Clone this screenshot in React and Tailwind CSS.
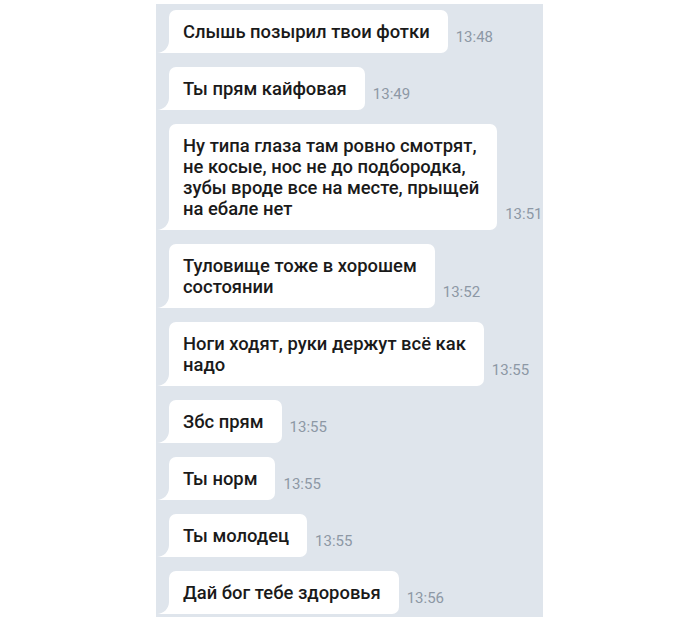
import React from "react";

const messages = [
  { lines: ["Слышь позырил твои фотки"], time: "13:48" },
  { lines: ["Ты прям кайфовая"], time: "13:49" },
  {
    lines: [
      "Ну типа глаза там ровно смотрят,",
      "не косые, нос не до подбородка,",
      "зубы вроде все на месте, прыщей",
      "на ебале нет",
    ],
    time: "13:51",
  },
  { lines: ["Туловище тоже в хорошем", "состоянии"], time: "13:52" },
  { lines: ["Ноги ходят, руки держут всё как", "надо"], time: "13:55" },
  { lines: ["Збс прям"], time: "13:55" },
  { lines: ["Ты норм"], time: "13:55" },
  { lines: ["Ты молодец"], time: "13:55" },
  { lines: ["Дай бог тебе здоровья"], time: "13:56" },
];

function Bubble({ lines, time }) {
  return (
    <div className="flex items-end">
      <div className="relative ml-[13px] rounded-[7px] rounded-bl-none bg-white pl-[14px] pr-[18px] py-[11px] text-[18.4px] font-medium leading-[21px] text-[#1a1a1a] whitespace-nowrap">
        <svg
          className="absolute left-[-12px] bottom-0"
          width="13"
          height="12"
          viewBox="0 0 13 12"
        >
          <path d="M13 0 L12 0 C12 7 6 12 0 12 L13 12 Z" fill="#ffffff" />
        </svg>
        {lines.map((l, i) => (
          <div key={i}>{l}</div>
        ))}
      </div>
      <div className="ml-[8px] mb-[8px] text-[15px] leading-[15px] text-[#8d98a5]">
        {time}
      </div>
    </div>
  );
}

export default function App() {
  return (
    <div
      className="w-[700px] h-[619px] bg-white pl-[156px] pt-[4px]"
      style={{ fontFamily: "Roboto, 'Noto Sans', sans-serif" }}
    >
      <div className="w-[387px] h-[613px] bg-[#dfe5ec] pt-[6px] flex flex-col gap-[14px] overflow-hidden">
        {messages.map((m, i) => (
          <Bubble key={i} {...m} />
        ))}
      </div>
    </div>
  );
}
